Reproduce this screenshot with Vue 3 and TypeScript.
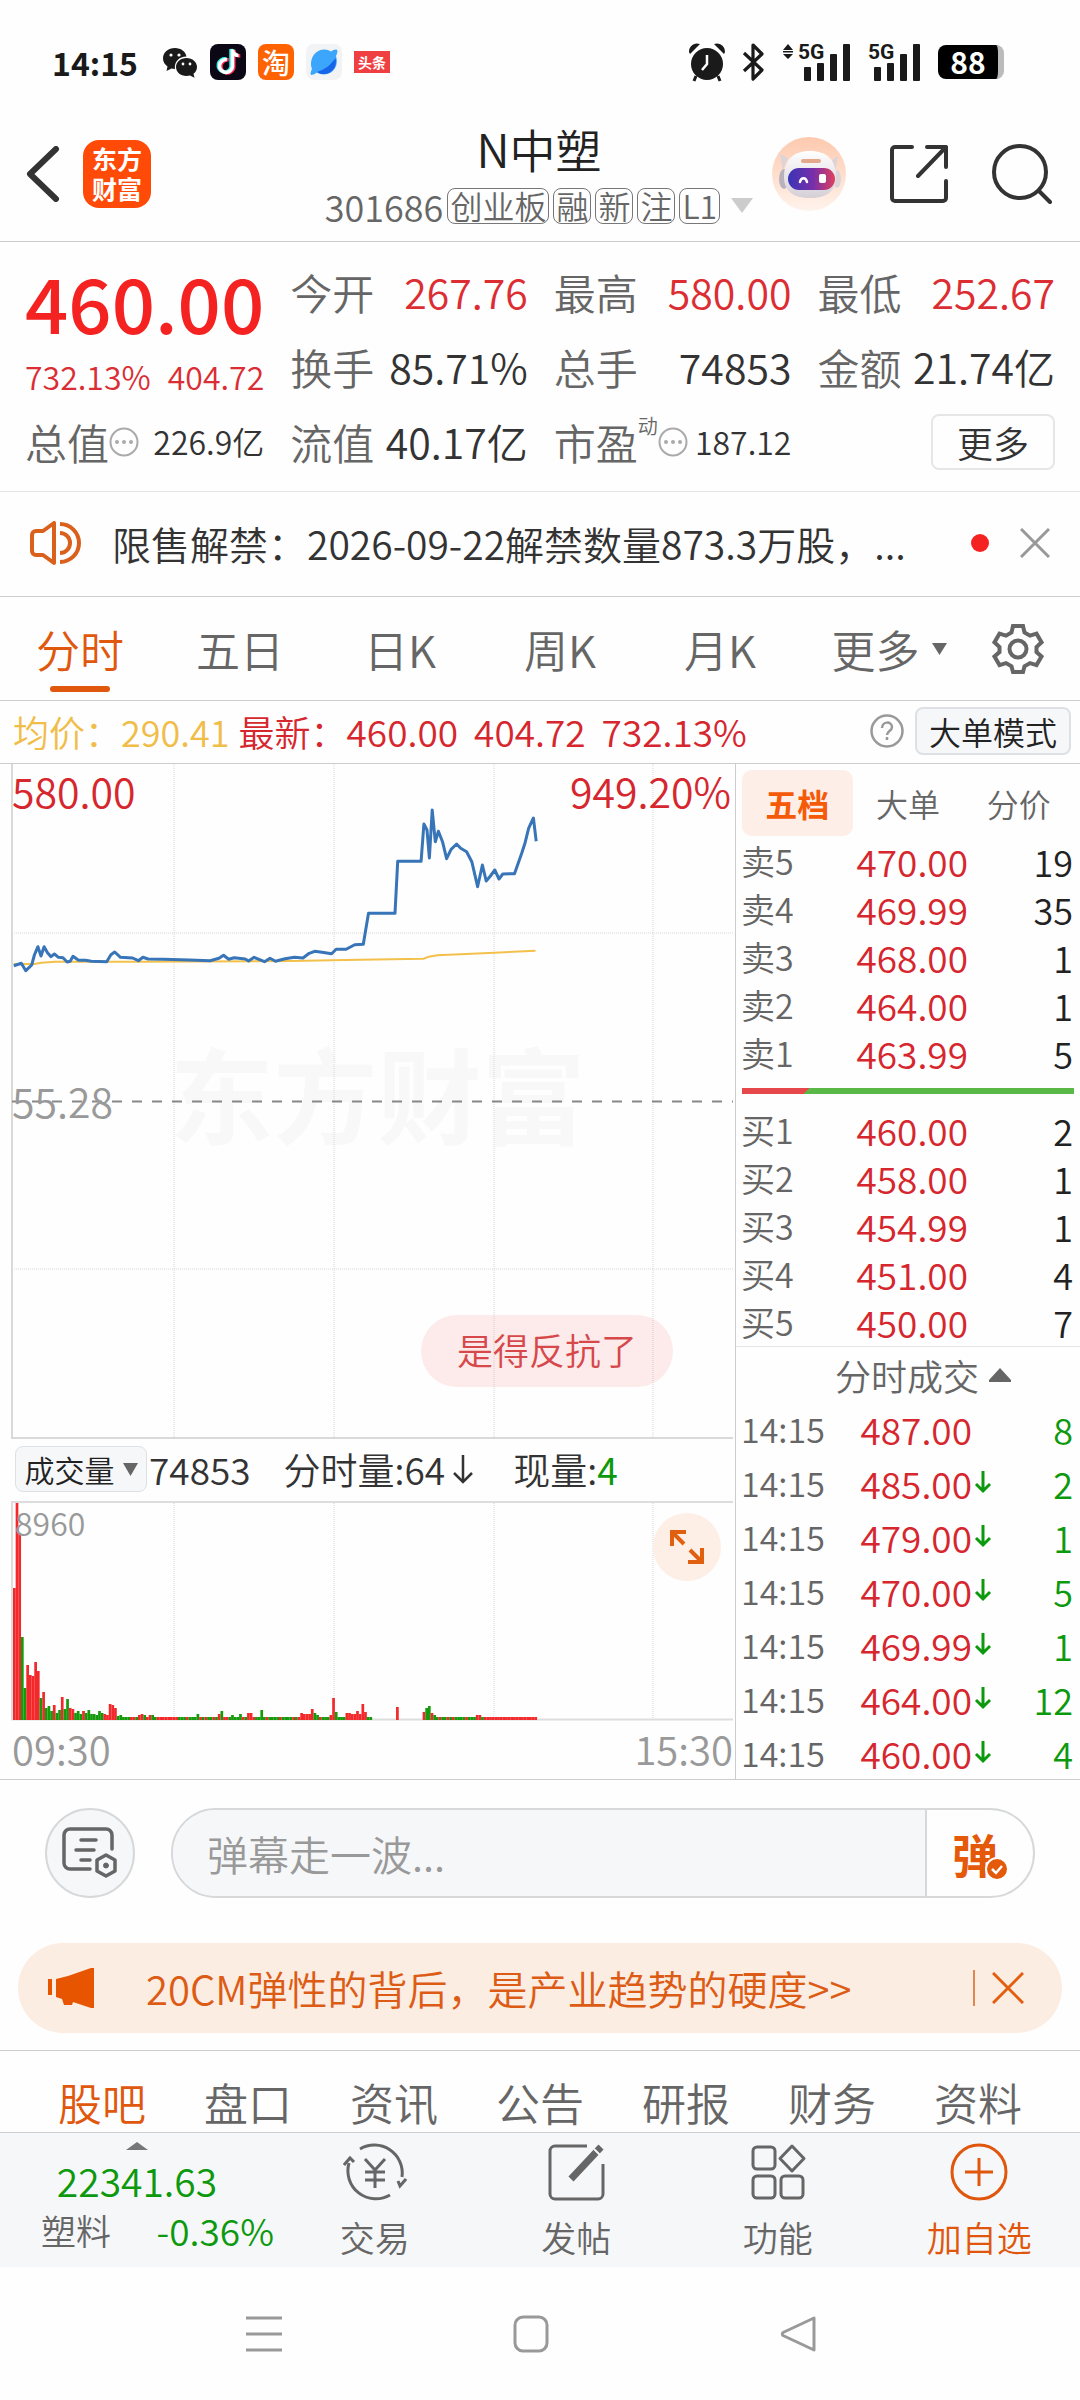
<script setup lang="ts">
import { ref } from 'vue'

interface Quote { label: string; value: string; up?: boolean }
interface Level { name: string; price: string; qty: number }
interface Deal { price: string; down: boolean; qty: number }
interface Bar { x: number; h: number; color: string }

const tags = ['创业板', '融', '新', '注', 'L1']

const quotes: Quote[] = [
  { label: '今开', value: '267.76', up: true },
  { label: '最高', value: '580.00', up: true },
  { label: '最低', value: '252.67', up: true },
  { label: '换手', value: '85.71%' },
  { label: '总手', value: '74853' },
  { label: '金额', value: '21.74亿' },
  { label: '流值', value: '40.17亿' },
]

const periods = ['分时', '五日', '日K', '周K', '月K']
const depthTabs = ['五档', '大单', '分价']
const infoTabs = ['股吧', '盘口', '资讯', '公告', '研报', '财务', '资料']

const sells: Level[] = [
  { name: '卖5', price: '470.00', qty: 19 },
  { name: '卖4', price: '469.99', qty: 35 },
  { name: '卖3', price: '468.00', qty: 1 },
  { name: '卖2', price: '464.00', qty: 1 },
  { name: '卖1', price: '463.99', qty: 5 },
]
const buys: Level[] = [
  { name: '买1', price: '460.00', qty: 2 },
  { name: '买2', price: '458.00', qty: 1 },
  { name: '买3', price: '454.99', qty: 1 },
  { name: '买4', price: '451.00', qty: 4 },
  { name: '买5', price: '450.00', qty: 7 },
]
const deals: Deal[] = [
  { price: '487.00', down: false, qty: 8 },
  { price: '485.00', down: true, qty: 2 },
  { price: '479.00', down: true, qty: 1 },
  { price: '470.00', down: true, qty: 5 },
  { price: '469.99', down: true, qty: 1 },
  { price: '464.00', down: true, qty: 12 },
  { price: '460.00', down: true, qty: 4 },
]

const message = ref('')

// Sampled minute series, mapped to the plot area by toPoints.
const priceSeries = '40,1097 62,1090 75,1112 92,1095 100,1065 110,1040 119,1068 128,1040 138,1058 148,1070 158,1062 170,1072 183,1073 195,1086 204,1084 212,1069 228,1081 248,1081 265,1084 310,1085 322,1064 333,1056 350,1072 385,1074 402,1082 415,1072 430,1077 475,1078 550,1080 610,1082 636,1075 649,1066 664,1078 680,1073 712,1077 722,1083 738,1072 768,1085 784,1075 800,1084 828,1076 855,1072 880,1074 898,1060 914,1054 935,1057 963,1061 976,1048 1005,1048 1030,1034 1055,1033 1070,940 1147,940 1155,784 1223,784 1231,672 1240,690 1247,774 1255,630 1264,725 1273,694 1285,725 1297,776 1310,748 1326,732 1338,745 1355,755 1370,785 1387,860 1401,795 1412,843 1424,828 1437,810 1449,837 1460,822 1494,821 1515,760 1525,728 1535,685 1549,654 1557,724'
const averageSeries = '40,1092 100,1092 120,1088 160,1085 400,1085 850,1083 1000,1080 1230,1076 1245,1070 1270,1066 1420,1059 1555,1052'

function toPoints(series: string): string {
  return series
    .split(' ')
    .map((pair) => {
      const [x, y] = pair.split(',').map(Number)
      return `${(x / 2.904).toFixed(1)},${(y / 3 - 164).toFixed(1)}`
    })
    .join(' ')
}

const pricePoints = toPoints(priceSeries)
const averagePoints = toPoints(averageSeries)

const openingBars = 'r132 r217 r186 g83 g32 r55 r45 r44 r58 r49 g22 r28 g12 g14 g9 r15 g7 g10 r23 g11 g21 r12 r11 g7 g9 g6 r9 g7 g10 g6 g6 g5 g9 g7 r6 r5 r16 r15 r12 g4 g5'.split(' ')
const spikes: Record<number, string> = {
  47: 'r5', 48: 'r6', 49: 'g5', 51: 'r5', 52: 'g5', 69: 'g6', 77: 'r6', 78: 'g9', 82: 'g5', 85: 'g6', 88: 'r7', 89: 'r7',
  93: 'g10', 108: 'r7', 109: 'r6', 110: 'r6', 111: 'r6', 112: 'r11', 113: 'g7', 114: 'g5', 119: 'r5', 120: 'r22', 121: 'g8',
  125: 'r7', 126: 'r7', 127: 'r6', 128: 'r6', 129: 'r9', 130: 'r6', 131: 'r16', 132: 'r8',
  144: 'r13', 154: 'r8', 155: 'g12', 156: 'g14', 157: 'r7', 158: 'g5', 174: 'r5', 175: 'r5',
}

const volumeBars: Bar[] = []
for (let i = 0; i <= 196; i++) {
  if ((i > 134 && i < 144) || (i > 144 && i < 154)) continue
  const tone = i > 176 || i % 7 === 2 || i % 5 === 0 || (i > 53 && i < 62) ? 'r3' : 'g3'
  const code = openingBars[i] ?? spikes[i] ?? tone
  volumeBars.push({
    x: 13 + i * 2.66,
    h: Number(code.slice(1)),
    color: code[0] === 'r' ? '#f2282a' : '#159a0c',
  })
}

const gridX = [174, 334, 494, 653]
</script>

<template>
  <div class="page">
    <div class="status">
      <div class="status-side">
        <span class="clock">14:15</span>
        <svg width="36" height="36" viewBox="0 0 36 36" fill="#1a1a1a">
          <path d="M13 4C6 4 1 8.500 1 14.500c0 3.300 1.700 6 4.500 8L4.500 27l5-2.500c1.200.3 2.300.5 3.500.5C12 18 17 12.500 24.500 12.500 23.500 7.500 19 4 13 4z" />
          <path d="M24.500 14C18.500 14 14 18 14 23s4.500 9 10.500 9c1.300 0 2.400-.2 3.500-.5l4.500 2.300-1-4c2.300-1.700 3.500-4 3.500-6.800 0-5-4.500-9-10.500-9z" />
          <g fill="#fff"><circle cx="9" cy="11" r="1.600" /><circle cx="17" cy="11" r="1.600" /><circle cx="21" cy="20" r="1.400" /><circle cx="28" cy="20" r="1.400" /></g>
        </svg>
        <svg width="36" height="36" viewBox="0 0 36 36">
          <rect width="36" height="36" rx="8" fill="#0b0714" />
          <g fill="none" stroke-width="3.500">
            <path d="M18 15a6.500 6.500 0 1 0 5 8V5c.5 4 3 6 6.500 6" stroke="#fe2c55" transform="translate(0.800 1)" />
            <path d="M16 15a6.500 6.500 0 1 0 5 8V5c.5 4 3 6 6.500 6" stroke="#25f4ee" />
            <path d="M17 15.500a6.500 6.500 0 1 0 5.500 7V5.500c.5 4 3 6 6 6" stroke="#fff" />
          </g>
        </svg>
        <span class="app-tao">淘</span>
        <svg width="36" height="36" viewBox="0 0 36 36">
          <rect width="36" height="36" rx="8" fill="#f2f3f5" />
          <path d="M5 31c-1-2 0-4 1-6C3 16 8 6 18 5.500c3 0 5 .8 7 2 2-1.500 5-2.500 6-1.500s0 4-1 6c3 9-2 18-12 18.500-3 0-5-.8-7-2-2 1.500-5 3-6 2.500z" fill="#3ba6fb" />
          <path d="M29.500 14c2 8-3 16-12 16-2.500 0-4.500-.5-6.500-2 7-2 14-7 18.500-14z" fill="#1665e8" />
        </svg>
        <span class="app-news">头条</span>
      </div>
      <div class="status-side right">
        <svg width="38" height="40" viewBox="0 0 38 40" fill="#1a1a1a">
          <circle cx="19" cy="22" r="16" />
          <path d="M1 10C1 4 6 0 12 2L2 12zM37 10C37 4 32 0 26 2l10 10z" />
          <path d="M8 34l-2 5M30 34l2 5" stroke="#1a1a1a" stroke-width="3" />
          <path d="M19 13v9l-5 6" stroke="#fff" stroke-width="2.500" fill="none" />
        </svg>
        <svg width="24" height="38" viewBox="0 0 24 38" fill="none" stroke="#1a1a1a" stroke-width="3.200" stroke-linejoin="round">
          <path d="M2 10l18 17-9 9V2l9 9L2 28" />
        </svg>
        <svg width="70" height="50" viewBox="0 -6 70 50" fill="#1a1a1a">
          <path d="M6 1l5 6H1zM6 16l5-5H1zM1 8h10v1.500H1z" />
          <rect x="22" y="24" width="7" height="14" rx="1" /><rect x="35" y="20" width="7" height="18" rx="1" /><rect x="48" y="11" width="7" height="27" rx="1" /><rect x="61" y="1" width="7" height="37" rx="1" />
          <text x="16" y="16" class="net">5G</text>
        </svg>
        <svg width="54" height="50" viewBox="0 -6 54 50" fill="#1a1a1a">
          <rect x="6" y="24" width="7" height="14" rx="1" /><rect x="19" y="20" width="7" height="18" rx="1" /><rect x="32" y="11" width="7" height="27" rx="1" /><rect x="45" y="1" width="7" height="37" rx="1" />
          <text x="0" y="16" class="net">5G</text>
        </svg>
        <span class="battery"><b>88</b></span>
      </div>
    </div>

    <header class="header">
      <div class="head-left">
        <button class="plain" aria-label="返回">
          <svg width="34" height="56" viewBox="0 0 34 56" fill="none" stroke="#333" stroke-width="6" stroke-linecap="round" stroke-linejoin="round"><path d="M30 3L4 28l26 25" /></svg>
        </button>
        <a href="#" class="brand">东方财富</a>
      </div>
      <div class="head-title">
        <h1>N中塑</h1>
        <div class="code">
          <span class="num">301686</span>
          <span v-for="t in tags" :key="t" class="tag">{{ t }}</span>
          <svg class="caret" width="22" height="15" viewBox="0 0 22 15" fill="#ccc"><path d="M0 0h22L11 15z" /></svg>
        </div>
      </div>
      <div class="head-right">
        <button class="plain" aria-label="助手">
          <svg width="74" height="74" viewBox="0 0 74 74">
            <defs>
              <linearGradient id="halo" x1="0" y1="0" x2="0" y2="1"><stop offset="0" stop-color="#fdc9ae" /><stop offset="1" stop-color="#fff3ec" /></linearGradient>
              <linearGradient id="visor" x1="0" y1="0" x2="1" y2="0"><stop offset="0" stop-color="#3a34b8" /><stop offset=".55" stop-color="#7a2fa8" /><stop offset="1" stop-color="#e0405c" /></linearGradient>
              <linearGradient id="shell" x1="0" y1="0" x2="0" y2="1"><stop offset="0" stop-color="#fff" /><stop offset="1" stop-color="#d5cfd6" /></linearGradient>
            </defs>
            <circle cx="37" cy="37" r="37" fill="url(#halo)" />
            <path d="M8 17l8 4-5 12zM66 19l-6 4 3 12z" fill="#ddd4d8" />
            <ellipse cx="12" cy="42" rx="5" ry="10" fill="#b9b2bd" />
            <ellipse cx="65" cy="42" rx="4" ry="9" fill="#ddd4d8" />
            <path d="M12 40c0-17 9-26 26-26s26 9 26 26c0 14-9 21-26 21S12 54 12 40z" fill="url(#shell)" />
            <rect x="29" y="22" width="20" height="4" rx="2" fill="#e3a98a" />
            <rect x="16" y="31" width="47" height="22" rx="11" fill="url(#visor)" />
            <path d="M28 45c1-5 6-5 7 0" fill="none" stroke="#fff" stroke-width="2.500" stroke-linecap="round" />
            <rect x="47" y="37" width="7" height="9" rx="2" fill="#fff" />
          </svg>
        </button>
        <button class="plain" aria-label="分享">
          <svg width="58" height="58" viewBox="0 0 58 58" fill="none" stroke="#333" stroke-width="4" stroke-linecap="round" stroke-linejoin="round">
            <path d="M22 2H5a3 3 0 0 0-3 3v48a3 3 0 0 0 3 3h48a3 3 0 0 0 3-3V36M37 2h19v20M56 2L28 31" />
          </svg>
        </button>
        <button class="plain" aria-label="搜索">
          <svg width="60" height="62" viewBox="0 0 60 62" fill="none" stroke="#333" stroke-width="4" stroke-linecap="round"><circle cx="28" cy="29" r="26" /><path d="M47 48l11 11" /></svg>
        </button>
      </div>
    </header>

    <section class="quote">
      <div class="last">
        <strong class="last-price">460.00</strong>
        <div class="last-diff"><span>732.13%</span><span>404.72</span></div>
        <div class="cell">
          <span class="label">总值</span>
          <svg width="30" height="30" viewBox="0 0 30 30" fill="#aaa"><circle cx="15" cy="15" r="13.500" fill="none" stroke="#aaa" stroke-width="2" /><circle cx="8" cy="15" r="2" /><circle cx="15" cy="15" r="2" /><circle cx="22" cy="15" r="2" /></svg>
          <span class="value small">226.9亿</span>
        </div>
      </div>
      <div class="quotes">
        <div v-for="q in quotes" :key="q.label" class="cell">
          <span class="label">{{ q.label }}</span>
          <span class="value" :class="{ up: q.up }">{{ q.value }}</span>
        </div>
        <div class="cell">
          <span class="label">市盈</span><sup>动</sup>
          <svg width="30" height="30" viewBox="0 0 30 30" fill="#aaa"><circle cx="15" cy="15" r="13.500" fill="none" stroke="#aaa" stroke-width="2" /><circle cx="8" cy="15" r="2" /><circle cx="15" cy="15" r="2" /><circle cx="22" cy="15" r="2" /></svg>
          <span class="value small">187.12</span>
        </div>
        <div class="cell"><button class="more">更多</button></div>
      </div>
    </section>

    <section class="notice">
      <svg width="52" height="44" viewBox="0 0 52 44" fill="none" stroke="#d9611c" stroke-width="4" stroke-linejoin="round">
        <path d="M24 2v40L13 34H6a4 4 0 0 1-4-4V14a4 4 0 0 1 4-4h7z" /><path d="M30 12a10 10 0 0 1 0 20M30 3a19 19 0 0 1 0 38" />
      </svg>
      <p>限售解禁：2026-09-22解禁数量873.3万股，...</p>
      <i class="dot"></i>
      <button class="plain" aria-label="关闭公告">
        <svg width="30" height="30" viewBox="0 0 30 30" stroke="#999" stroke-width="3"><path d="M1 1l28 28M29 1L1 29" /></svg>
      </button>
    </section>

    <nav class="periods">
      <button v-for="(p, i) in periods" :key="p" class="period" :class="{ active: i === 0 }">{{ p }}</button>
      <button class="period wide">更多<svg width="15" height="12" viewBox="0 0 15 12" fill="#666"><path d="M0 0h15L7.500 12z" /></svg></button>
      <button class="plain gear" aria-label="设置">
        <svg width="52" height="52" viewBox="0 0 52 52" fill="none" stroke="#666" stroke-width="4">
          <path d="M21 3h10l1.500 6.500 5.500 3.200 6.500-2 5 8.600L44.500 24v5l5 4.500-5 8.600-6.500-2-5.500 3.200L31 49H21l-1.500-5.700-5.500-3.200-6.500 2-5-8.600L7.500 29v-5l-5-4.700 5-8.600 6.500 2 5.500-3.200z" /><circle cx="26" cy="26" r="8.500" />
        </svg>
      </button>
    </nav>

    <section class="legend">
      <span class="avg">均价：290.41</span>
      <span>最新：</span>
      <span class="now-value">460.00</span>
      <span class="now-value">404.72</span>
      <span class="now-value">732.13%</span>
      <svg class="help" width="34" height="34" viewBox="0 0 34 34" fill="none" stroke="#999" stroke-width="2.500"><circle cx="17" cy="17" r="15.500" /><path d="M12 14c0-7 10-7 10-1 0 4-5 4-5 8M17 23v3" /></svg>
      <button class="mode">大单模式</button>
    </section>

    <main class="board">
      <div class="charts">
        <div class="plot">
          <div class="watermark">东方财富</div>
          <svg viewBox="0 0 735 675" fill="none">
            <g stroke="#d6d6d6" stroke-dasharray="1 1">
              <path v-for="x in gridX" :key="x" :d="`M${x} 0V674`" /><path d="M12 169H733M12 505H733" />
            </g>
            <path d="M12 0V674H733" stroke="#d9d9d9" stroke-width="2" />
            <path d="M12 337.500H733" stroke="#888" stroke-width="2" stroke-dasharray="10 10" />
            <polyline :points="averagePoints" stroke="#f3c14b" stroke-width="2" />
            <polyline :points="pricePoints" stroke="#3874b8" stroke-width="3" stroke-linejoin="round" />
          </svg>
          <span class="mark top-left">580.00</span>
          <span class="mark top-right">949.20%</span>
          <span class="mark middle">55.28</span>
          <span class="bubble">是得反抗了</span>
        </div>
        <div class="volume-head">
          <button class="indicator">成交量<svg width="15" height="13" viewBox="0 0 15 13" fill="#666"><path d="M0 0h15L7.500 13z" /></svg></button>
          <span>74853</span>
          <span class="minute">分时量:64<svg width="20" height="30" viewBox="0 0 20 30" fill="none" stroke="#333" stroke-width="2.500"><path d="M10 1v27M1 19l9 9 9-9" /></svg></span>
          <span class="now">现量:<b>4</b></span>
        </div>
        <div class="plot">
          <svg viewBox="0 0 735 220" fill="none">
            <path v-for="x in gridX" :key="x" :d="`M${x} 0V218`" stroke="#d6d6d6" stroke-dasharray="1 1" />
            <path d="M733 1H12V218.500H733" stroke="#ddd" stroke-width="2" />
            <rect v-for="b in volumeBars" :key="b.x" :x="b.x" :y="219 - b.h" width="2.700" :height="b.h" :fill="b.color" />
          </svg>
          <span class="peak">8960</span>
          <button class="expand" aria-label="全屏">
            <svg width="34" height="34" viewBox="0 0 34 34" fill="none" stroke="#e0600f" stroke-width="4"><path d="M2 16V2h14M2 2l12 12M32 18v14H18M32 32L20 20" /></svg>
          </button>
        </div>
        <div class="axis"><span>09:30</span><span>15:30</span></div>
      </div>

      <aside class="depth">
        <div class="depth-tabs">
          <button v-for="(t, i) in depthTabs" :key="t" :class="{ active: i === 0 }">{{ t }}</button>
        </div>
        <table class="levels">
          <tbody><tr v-for="l in sells" :key="l.name"><th scope="row">{{ l.name }}</th><td class="price">{{ l.price }}</td><td class="qty">{{ l.qty }}</td></tr></tbody>
        </table>
        <div class="ratio"></div>
        <table class="levels">
          <tbody><tr v-for="l in buys" :key="l.name"><th scope="row">{{ l.name }}</th><td class="price">{{ l.price }}</td><td class="qty">{{ l.qty }}</td></tr></tbody>
        </table>
        <button class="deal-head">分时成交<svg width="22" height="14" viewBox="0 0 22 14" fill="#666"><path d="M11 0l11 12v2H0v-2z" /></svg></button>
        <table class="deals">
          <tbody>
            <tr v-for="d in deals" :key="d.price">
              <th scope="row">14:15</th>
              <td class="price">{{ d.price }}<svg width="20" height="50" viewBox="0 -14 20 50" fill="none" stroke="#0d990d" stroke-width="3"><path v-if="d.down" d="M11 1v20M4 14l7 7 7-7" /></svg></td>
              <td class="qty">{{ d.qty }}</td>
            </tr>
          </tbody>
        </table>
      </aside>
    </main>

    <form class="chat" @submit.prevent>
      <button type="button" class="chat-set" aria-label="弹幕设置">
        <svg width="56" height="52" viewBox="0 0 56 52" fill="none" stroke="#666" stroke-width="3.500" stroke-linecap="round">
          <path d="M50 22V8a6 6 0 0 0-6-6H8a6 6 0 0 0-6 6v28a6 6 0 0 0 6 6h20M19 13h15M14 23h18M19 33h9" />
          <path d="M44 28l9 5v11l-9 5-9-5V33z" stroke-linejoin="round" /><circle cx="44" cy="38.500" r="2.500" fill="#666" stroke-width="1" />
        </svg>
      </button>
      <div class="chat-box">
        <input v-model="message" type="text" aria-label="弹幕" placeholder="弹幕走一波..." />
        <button class="chat-send" aria-label="弹幕开关">弹
          <svg width="24" height="24" viewBox="0 0 24 24"><circle cx="12" cy="12" r="11" fill="#e5590b" stroke="#fff" stroke-width="2" /><path d="M7 12l4 4 6-7" fill="none" stroke="#fff" stroke-width="2.500" /></svg>
        </button>
      </div>
    </form>

    <section class="banner">
      <svg width="46" height="40" viewBox="0 0 46 40" fill="#e85500"><path d="M0 11h4v16H0zM8 11l12-3L43 0h3v40h-3l-18-6-1 3h-8l-2-6-6-2z" /></svg>
      <a href="#">20CM弹性的背后，是产业趋势的硬度&gt;&gt;</a>
      <button class="plain" aria-label="关闭"><svg width="32" height="32" viewBox="0 0 32 32" stroke="#e0600f" stroke-width="3"><path d="M1 1l30 30M31 1L1 31" /></svg></button>
    </section>

    <nav class="info-tabs">
      <a v-for="(t, i) in infoTabs" :key="t" href="#" :class="{ active: i === 0 }">{{ t }}</a>
    </nav>

    <footer class="dock">
      <div class="sector">
        <svg width="22" height="8" viewBox="0 0 22 8" fill="#777"><path d="M11 0l11 8H0z" /></svg>
        <span class="index">22341.63</span>
        <div class="sector-row"><span>塑料</span><b>-0.36%</b></div>
      </div>
      <button class="action">
        <svg width="64" height="60" viewBox="0 0 64 60" fill="none" stroke="#666" stroke-width="3">
          <path d="M17 7a28 28 0 0 1 42 28M47 53A28 28 0 0 1 6 21" /><path d="M1 23l6-7 4 4M63 37l-6 7-2-5" /><path d="M22 17l10 11 10-11M32 28v18M22 30h20M22 38h20" />
        </svg>交易
      </button>
      <button class="action">
        <svg width="64" height="60" viewBox="0 0 64 60" fill="none" stroke="#666" stroke-width="3">
          <path d="M43 4H11a5 5 0 0 0-5 5v43a5 5 0 0 0 5 5h43a5 5 0 0 0 5-5V22" /><path d="M27 37L57 5" stroke-width="7" /><path d="M50 7l6 6" stroke="#f6f7f9" stroke-width="2" />
        </svg>发帖
      </button>
      <button class="action">
        <svg width="64" height="60" viewBox="0 0 64 60" fill="none" stroke="#666" stroke-width="3">
          <rect x="7" y="5" width="22" height="22" rx="4" /><rect x="7" y="34" width="22" height="22" rx="4" /><rect x="35" y="34" width="22" height="22" rx="4" /><path d="M46 4l12 12.500L46 29 34 16.500z" stroke-linejoin="round" />
        </svg>功能
      </button>
      <button class="action add">
        <svg width="64" height="60" viewBox="0 0 64 60" fill="none" stroke="#e0560d" stroke-width="3"><circle cx="32" cy="30" r="27" /><path d="M32 16v28M18 30h28" /></svg>加自选
      </button>
    </footer>

    <div class="system">
      <svg width="36" height="38" viewBox="0 0 36 38" stroke="#999" stroke-width="3"><path d="M0 3h36M0 19h36M0 35h36" /></svg>
      <svg width="36" height="38" viewBox="0 0 36 38" fill="none" stroke="#999" stroke-width="3"><rect x="2" y="2" width="32" height="34" rx="8" /></svg>
      <svg width="36" height="38" viewBox="0 0 36 38" fill="none" stroke="#999" stroke-width="3" stroke-linejoin="round"><path d="M34 3v32L3 20.500a2 2 0 0 1 0-3z" /></svg>
    </div>
  </div>
</template>

<style>
body { margin: 0; background: #fefefe; }
</style>

<style scoped>
.page {
  font-family: "Noto Sans CJK SC", "Noto Sans", sans-serif;
  font-weight: 350;
  color: #333;
  background: #fefefe;
}
.page * { box-sizing: border-box; }
svg { display: block; flex: none; }
button { font: inherit; color: inherit; padding: 0; margin: 0; border: 0; background: none; white-space: nowrap; }
a { color: inherit; text-decoration: none; }
h1, p { margin: 0; font-weight: inherit; }
span, strong, th, td { white-space: nowrap; }
.plain { display: block; }

.status { height: 108px; padding: 16px 76px 0 52px; display: flex; justify-content: space-between; align-items: center; }
.status-side { display: flex; align-items: center; gap: 12px; }
.clock { font-size: 32px; line-height: 36px; font-weight: 700; color: #1a1a1a; margin-right: 12px; }
.app-tao { width: 36px; height: 36px; border-radius: 8px; background: #ff6200; color: #fff; font-size: 28px; line-height: 36px; font-weight: 500; text-align: center; }
.app-news { width: 36px; height: 22px; background: #ef3f43; color: #fff; font-size: 14px; line-height: 22px; font-weight: 700; text-align: center; }
.status-side.right { gap: 16px; }
.net { font: 700 21px "Roboto", sans-serif; }
.battery { width: 66px; height: 34px; border-radius: 8px; background: #000; border-right: 6px solid #bbb; color: #fff; font-size: 30px; line-height: 32px; text-align: center; }
.battery b { font-weight: 700; }

.header { height: 134px; border-bottom: 1px solid #ccc; display: grid; grid-template-columns: 1fr auto 1fr; align-items: center; padding: 0 28px 2px 26px; }
.head-left { display: flex; align-items: center; gap: 23px; }
.brand { width: 68px; height: 68px; padding: 3px 9px; border-radius: 16px; background: #ff4a08; color: #fff; font-size: 25px; line-height: 30px; font-weight: 700; word-break: break-all; }
.head-title { display: flex; flex-direction: column; align-items: center; gap: 16px; }
h1 { font-size: 46px; line-height: 48px; color: #222; }
.code { display: flex; align-items: center; gap: 4px; color: #666; }
.num { font-size: 36px; line-height: 36px; }
.tag { border: 1px solid #777; border-radius: 8px; height: 36px; padding: 0 2px; font-size: 32px; line-height: 32px; }
.caret { margin-left: 7px; }
.head-right { display: flex; align-items: center; justify-content: flex-end; gap: 44px; }

.quote { display: grid; grid-template-columns: 238fr 766fr; column-gap: 26px; padding: 12px 25px; border-bottom: 1px solid #e5e5e5; }
.quotes { display: grid; grid-template-columns: repeat(3, 1fr); column-gap: 26px; }
.last { display: flex; flex-direction: column; }
.last-price { height: 95px; font-size: 76px; line-height: 95px; font-weight: 500; color: #f52222; }
.last-diff { height: 55px; display: flex; justify-content: space-between; font-size: 32px; line-height: 55px; color: #da2e34; }
.cell { height: 75px; display: flex; align-items: center; }
.label { font-size: 42px; line-height: 75px; color: #666; }
.value { margin-left: auto; font-size: 41px; line-height: 75px; }
.value.small { font-size: 32px; }
.up { color: #dc2d33; }
sup { font-size: 20px; line-height: 20px; align-self: flex-start; margin: 12px 0 0 0; color: #666; }
.more { margin-left: auto; width: 124px; height: 56px; border: 2px solid #e6e6e6; border-radius: 8px; font-size: 36px; line-height: 48px; }

.notice { height: 105px; border-bottom: 1px solid #ccc; display: flex; align-items: center; padding: 0 30px 2px; }
.notice p { margin-left: 30px; flex: 1; font-size: 39px; line-height: 58px; overflow: hidden; white-space: nowrap; }
.dot { width: 18px; height: 18px; border-radius: 50%; background: #f52222; margin-right: 31px; }

.periods { height: 104px; border-bottom: 1px solid #ccc; display: flex; align-items: center; padding-right: 22px; }
.period { flex: 160 1 0; height: 103px; font-size: 44px; line-height: 98px; color: #666; position: relative; }
.period.wide { flex-grow: 178; display: flex; align-items: center; justify-content: center; gap: 12px; }
.period.active { color: #e0580e; }
.period.active::after { content: ""; position: absolute; left: 50%; bottom: 8px; width: 60px; height: 6px; margin-left: -30px; border-radius: 3px; background: #e0580e; }
.gear { flex: 80 1 0; display: flex; justify-content: center; }

.legend { height: 63px; border-bottom: 1px solid #ccc; display: flex; align-items: center; padding: 0 9px 2px 13px; font-size: 36px; line-height: 56px; color: #d6262e; }
.avg { color: #f0bd49; margin-right: 9px; }
.now-value { font-size: 37px; margin-right: 16px; }
.help { margin-left: auto; }
.mode { margin-left: 11px; width: 156px; height: 48px; border: 2px solid #dde1e5; border-radius: 8px; background: #f6f7f9; color: #222; font-size: 32px; line-height: 42px; }

.board { display: grid; grid-template-columns: 735fr 345fr; border-bottom: 1px solid #ccc; }
.plot { position: relative; }
.plot > svg { position: relative; width: 100%; height: auto; }
.watermark { position: absolute; left: 0; right: 0; top: 39%; padding-left: 20px; font-size: 104px; line-height: 130px; font-weight: 700; text-align: center; color: #f8f8f8; }
.mark { position: absolute; left: 12px; font-size: 41px; line-height: 50px; color: #d6262e; }
.top-left { top: 1px; }
.top-right { top: 1px; left: auto; right: 4px; }
.middle { top: 50%; margin-top: -27px; color: #999; }
.bubble { position: absolute; right: 62px; bottom: 52px; height: 72px; padding: 0 36px; border-radius: 36px; background: rgba(245, 60, 70, 0.1); color: #d6484a; font-size: 36px; line-height: 68px; }
.volume-head { height: 62px; display: flex; align-items: center; padding: 0 0 2px 15px; font-size: 37px; line-height: 56px; }
.indicator { width: 132px; height: 46px; margin-right: 2px; display: flex; align-items: center; justify-content: center; gap: 8px; border: 1px solid #dde1e5; border-radius: 8px; background: #f6f7f9; font-size: 30px; line-height: 40px; color: #222; }
.minute { margin-left: 33px; display: flex; align-items: center; gap: 8px; }
.now { margin-left: 40px; }
.now b { font-weight: 400; color: #0d990d; }
.peak { position: absolute; left: 15px; top: 6px; font-size: 32px; line-height: 30px; color: #999; }
.expand { position: absolute; right: 14px; top: 12px; width: 68px; height: 68px; border-radius: 50%; background: #fdeee6; display: flex; align-items: center; justify-content: center; }
.axis { display: flex; justify-content: space-between; padding: 0 2px 0 12px; font-size: 40px; line-height: 55px; color: #999; }

.depth { border-left: 1px solid #ccc; }
.depth-tabs { display: flex; padding: 6px 6px 0; margin-bottom: 1px; }
.depth-tabs button { flex: 1; height: 66px; border-radius: 10px; font-size: 32px; line-height: 62px; color: #666; }
.depth-tabs .active { background: #fdeee7; color: #f55a08; font-weight: 700; }
table { width: 100%; table-layout: fixed; border-collapse: collapse; }
th, td { padding: 0; font-weight: inherit; font-size: 36px; }
th { padding-left: 5px; text-align: left; font-size: 34px; color: #666; }
.levels th, .levels td { height: 48px; line-height: 48px; }
.levels th { width: 100px; }
.levels .price { width: 132px; }
.price { text-align: right; font-size: 37px; color: #d6262e; }
.qty { text-align: right; padding-right: 7px; color: #222; }
.ratio { height: 6px; margin: 11px 6px 12px; background: linear-gradient(135deg, #e5474b 20%, #5ab946 20%); }
.deal-head { width: 100%; height: 56px; border-top: 1px solid #e5e5e5; display: flex; align-items: center; justify-content: center; gap: 10px; padding-left: 30px; font-size: 36px; line-height: 52px; color: #666; }
.deals { margin-bottom: -1px; }
.deals th, .deals td { height: 54px; line-height: 54px; }
.deals th { width: 104px; }
.deals .price { width: 152px; }
.deals .price svg { display: inline-block; vertical-align: top; }
.deals .qty { color: #0d990d; }

.chat { display: flex; gap: 36px; padding: 28px 45px 45px; }
.chat-set { flex: none; width: 90px; height: 90px; border: 2px solid #d6d8da; border-radius: 50%; background: #f6f7f9; display: flex; align-items: center; justify-content: center; }
.chat-box { flex: 1; display: flex; height: 90px; border: 2px solid #d6d8da; border-radius: 45px; overflow: hidden; }
.chat-box input { flex: 1; min-width: 0; border: 0; border-right: 2px solid #d6d8da; border-radius: 0; background: #f6f7f9; padding: 0 34px; font: inherit; font-size: 41px; color: #333; }
.chat-box input::placeholder { color: #999; opacity: 1; }
.chat-send { position: relative; width: 106px; padding-right: 10px; font-size: 46px; line-height: 80px; font-weight: 700; color: #e5590b; }
.chat-send svg { position: absolute; right: 24px; bottom: 15px; }

.banner { height: 90px; margin: 0 18px 17px; padding: 0 38px 0 30px; border-radius: 45px; background: #fcede3; display: flex; align-items: center; color: #dd5c15; }
.banner a { margin-left: 52px; flex: 1; font-size: 40px; line-height: 86px; white-space: nowrap; }
.banner .plain { border-left: 2px solid #e0864f; padding: 2px 0 2px 17px; }

.info-tabs { display: flex; height: 83px; padding: 0 29px; border-top: 1px solid #ccc; border-bottom: 1px solid #ccd0d3; }
.info-tabs a { flex: 1; text-align: center; font-size: 44px; line-height: 102px; color: #666; }
.info-tabs .active { color: #e0580e; }

.dock { display: flex; height: 134px; background: #f6f7f9; color: #666; }
.sector { width: 274px; padding-top: 9px; display: flex; flex-direction: column; align-items: center; }
.index { font-size: 39px; line-height: 60px; color: #0d990d; }
.sector-row { align-self: stretch; display: flex; align-items: center; justify-content: space-between; padding-left: 41px; font-size: 35px; line-height: 40px; }
.sector-row b { font-size: 37px; font-weight: inherit; color: #0d990d; }
.action { flex: 1; display: flex; flex-direction: column; align-items: center; padding-top: 9px; gap: 12px; font-size: 35px; line-height: 46px; }
.add { color: #e0560d; }

.system { height: 133px; display: flex; justify-content: center; align-items: center; gap: 231px; padding-right: 18px; }
</style>
